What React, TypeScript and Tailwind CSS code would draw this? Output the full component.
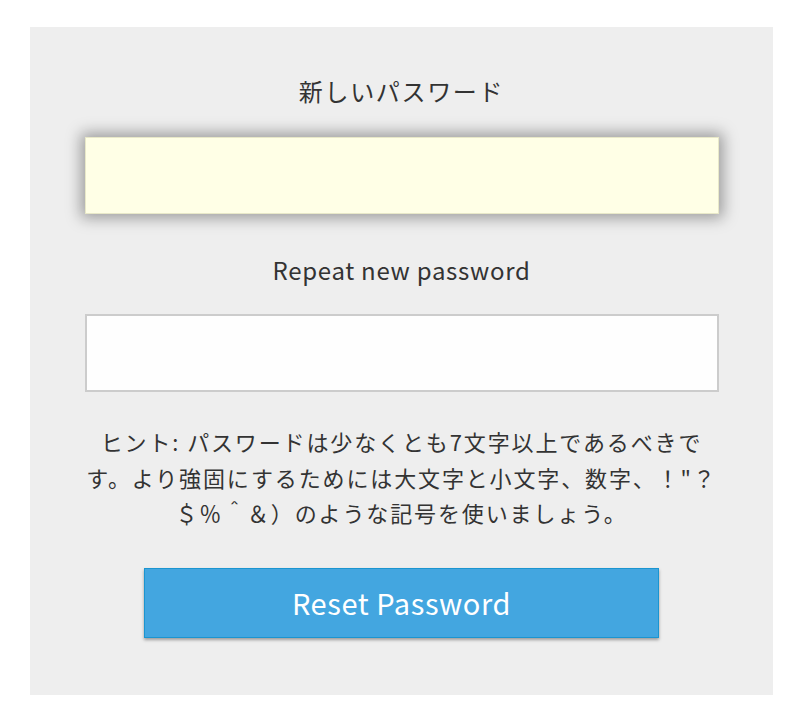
export default function App() {
  return (
    <div className="min-h-[722px] bg-white pt-[27px] font-['Noto_Sans_CJK_JP',sans-serif] text-[#333]">
      <div className="mx-[30px] flex h-[668px] w-[743px] flex-col items-center bg-[#eeeeee] pt-[46px]">
        <label className="text-[24px] leading-[36px] tracking-[0.07em]">新しいパスワード</label>
        <input
          type="password"
          className="mt-[28px] h-[77px] w-[634px] border border-[#e8e8c8] bg-[#ffffe6] shadow-[0_0_14px_4px_rgba(0,0,0,0.35)] outline-none"
        />
        <label className="mt-[38px] text-[24px] leading-[36px] tracking-[0.03em]">Repeat new password</label>
        <input
          type="password"
          className="mt-[26px] h-[78px] w-[634px] border-2 border-[#cccccc] bg-[#fefefe] outline-none"
        />
        <p className="mt-[32px] w-[700px] text-center text-[22px] leading-[35.5px] tracking-[0.085em]">
          ヒント: パスワードは少なくとも7文字以上であるべきで
          <br />
          す。より強固にするためには大文字と小文字、数字、！"？
          <br />
          ＄％＾＆）のような記号を使いましょう。
        </p>
        <button className="mt-[37px] h-[70px] w-[515px] border border-[#1b95d0] bg-[#43a6e0] text-[29px] tracking-[0.02em] text-white shadow-[0_2px_3px_rgba(0,0,0,0.35)]">
          Reset Password
        </button>
      </div>
    </div>
  );
}
